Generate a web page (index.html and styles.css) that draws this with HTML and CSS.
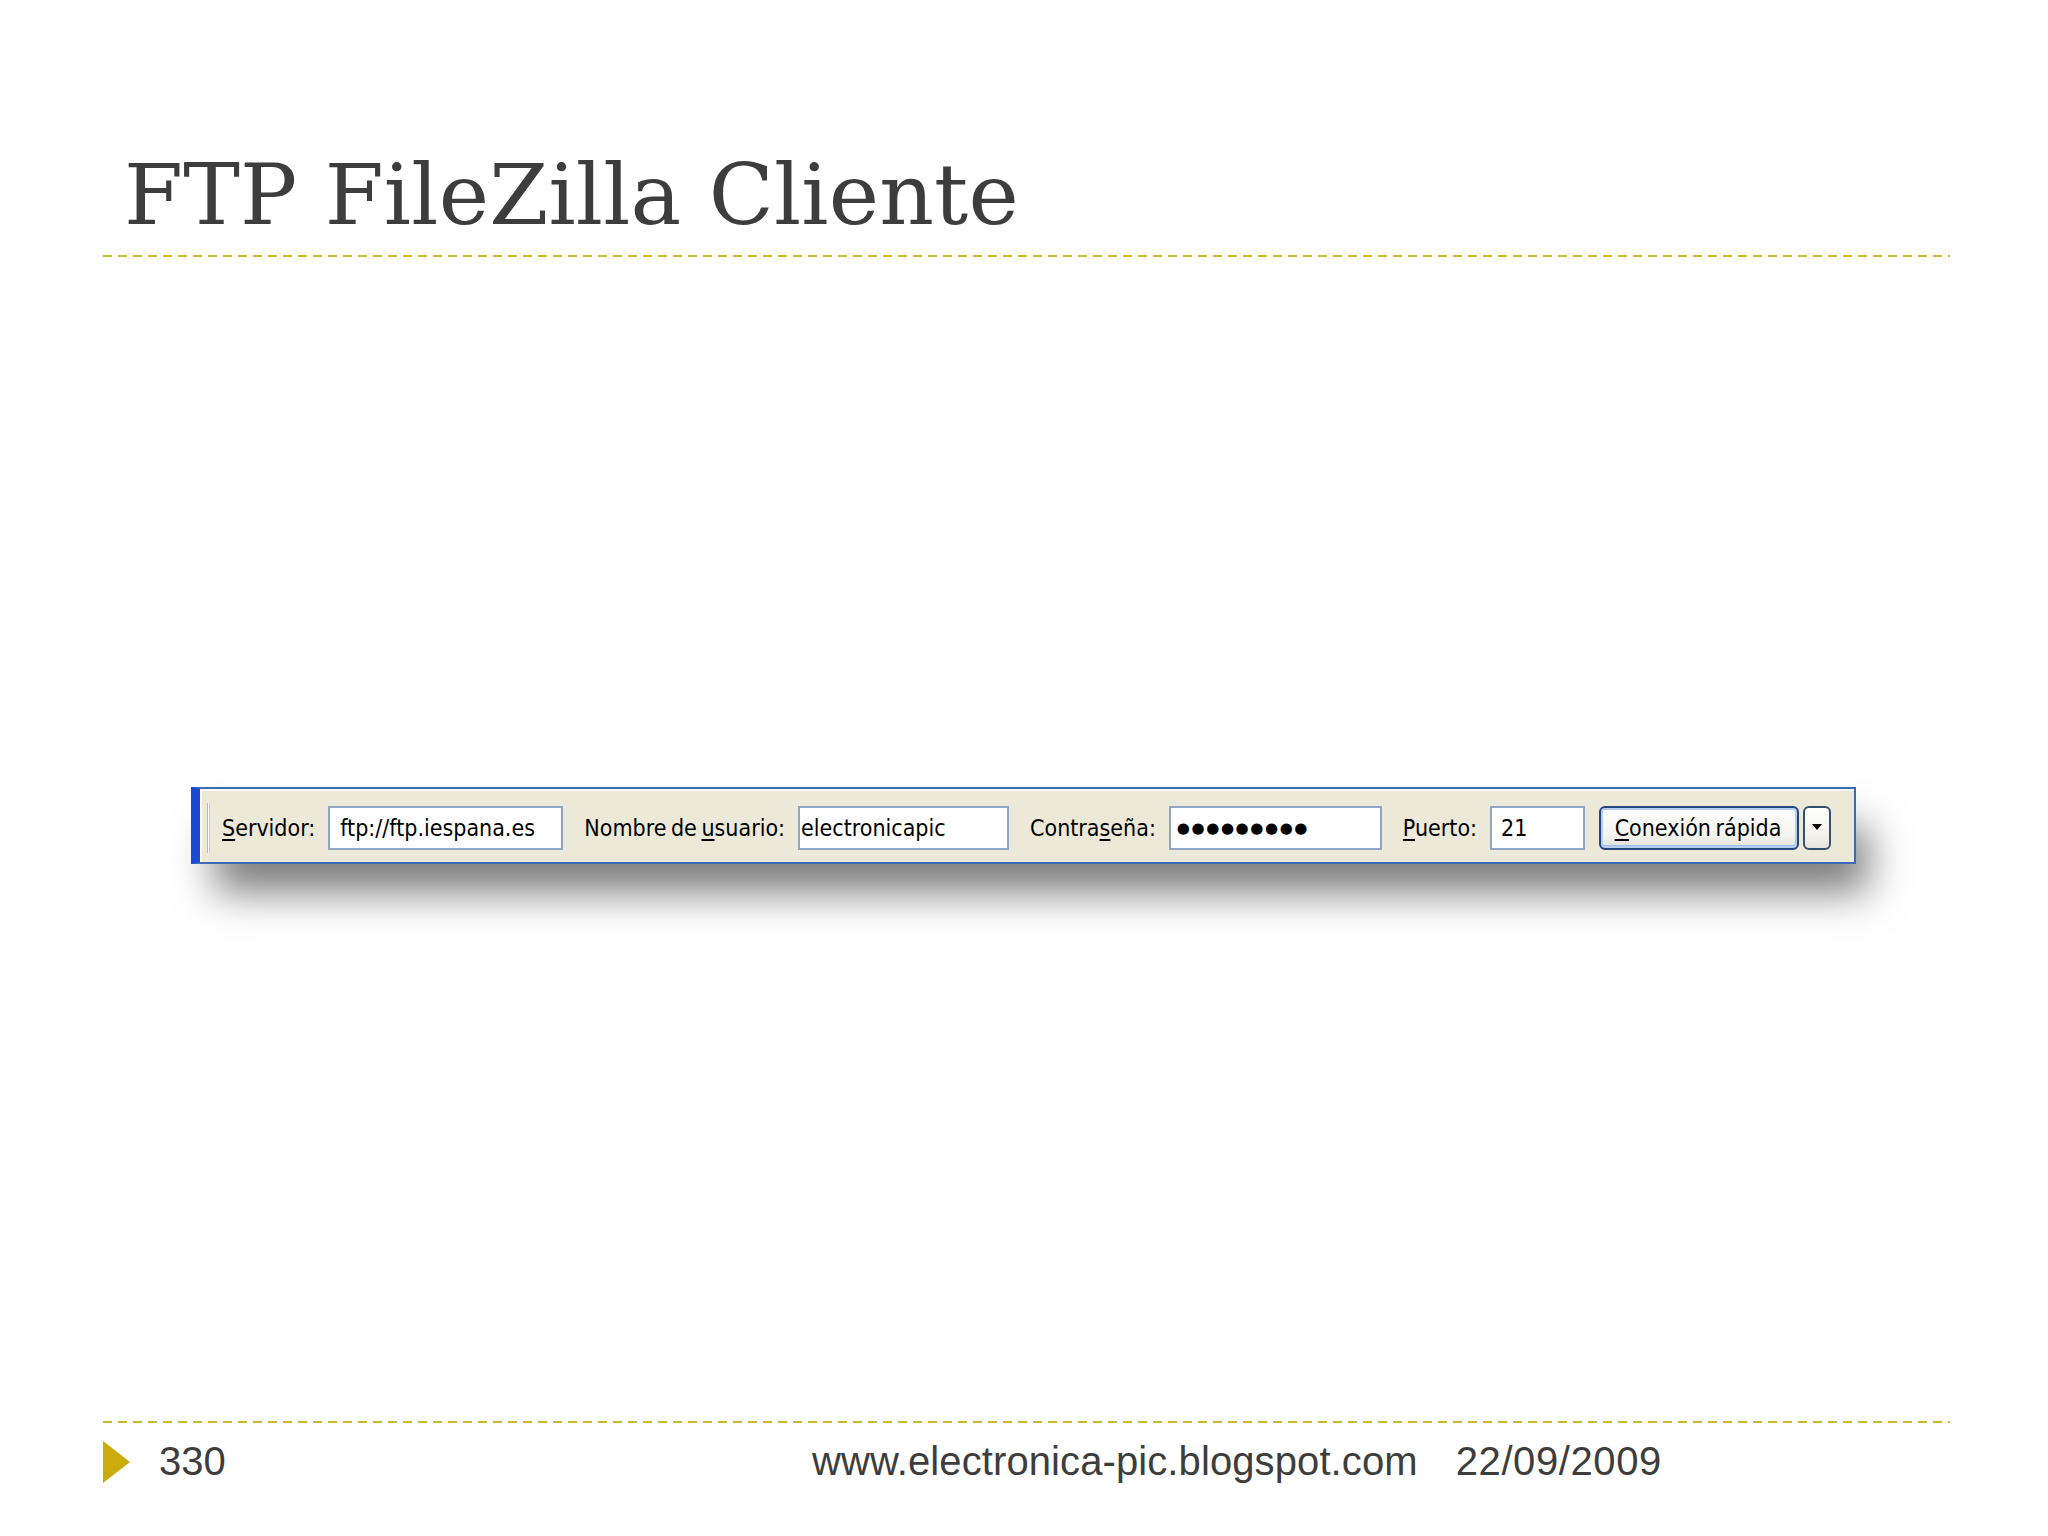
FILE: index.html
```html
<!DOCTYPE html>
<html lang="es">
<head>
<meta charset="utf-8">
<title>FTP FileZilla Cliente</title>
<link rel="stylesheet" href="styles.css">
</head>
<body>
<div class="slide">
  <header class="slide-head">
    <h1 class="slide-title">FTP FileZilla Cliente</h1>
    <div class="dash-rule"></div>
  </header>

  <main class="slide-body">
    <div class="qc-bar">
      <div class="grip"></div>
      <div class="qc-fields">
        <div class="qc-field">
          <span class="qc-label"><u>S</u>ervidor:</span>
          <div class="qc-input w-host pad-host">ftp://ftp.iespana.es</div>
        </div>
        <div class="qc-field">
          <span class="qc-label">Nombre de <u>u</u>suario:</span>
          <div class="qc-input w-user pad-user">electronicapic</div>
        </div>
        <div class="qc-field">
          <span class="qc-label">Contra<u>s</u>eña:</span>
          <div class="qc-input w-pass pad-pass"><span class="pw-dots">●●●●●●●●●</span></div>
        </div>
        <div class="qc-field">
          <span class="qc-label"><u>P</u>uerto:</span>
          <div class="qc-input w-port pad-port">21</div>
        </div>
        <div class="qc-connect">
          <div class="qc-button"><u>C</u>onexión rápida</div>
          <div class="qc-drop"><span class="drop-arrow"></span></div>
        </div>
      </div>
    </div>
  </main>

  <footer class="slide-foot">
    <div class="dash-rule"></div>
    <div class="foot-row">
      <div class="foot-num"><span class="bullet-tri"></span><span class="num">330</span></div>
      <div class="foot-url">www.electronica-pic.blogspot.com</div>
      <div class="foot-date">22/09/2009</div>
    </div>
  </footer>
</div>
</body>
</html>
```

FILE: styles.css
```css
html, body {
  margin: 0;
  padding: 0;
  background: #ffffff;
}

.slide {
  width: 2048px;
  height: 1536px;
  box-sizing: border-box;
  padding: 0 98px 0 103px;
  display: flex;
  flex-direction: column;
  background: #ffffff;
}

/* ---------- header ---------- */
.slide-head {
  padding-top: 152px;
}

.slide-title {
  margin: 0 0 0 21px;
  font-family: "DejaVu Serif", "Liberation Serif", serif;
  font-weight: normal;
  font-size: 85px;
  letter-spacing: 0.2px;
  line-height: 1;
  color: #3d3d3d;
  white-space: nowrap;
}

.dash-rule {
  height: 2px;
  background: repeating-linear-gradient(to right, #cbb928 0 9px, transparent 9px 15px);
}

.slide-head .dash-rule {
  margin-top: 18px;
}

/* ---------- body / quick connect bar ---------- */
.slide-body {
  flex: 1;
  padding: 530px 0 0 88px;
}

.qc-bar {
  width: 1665px;
  height: 77px;
  box-sizing: border-box;
  display: flex;
  align-items: center;
  padding-top: 5px;
  background: #ece9d8;
  border: 2px solid #3b6bb8;
  border-left: 9px solid #1848d4;
  box-shadow:
    inset 0 2px 0 #fbfaf4,
    inset 2px 0 0 #fbfaf4,
    18px 34px 42px -6px rgba(0, 0, 0, 0.52);
  font-family: "DejaVu Sans Condensed", "DejaVu Sans", sans-serif;
  font-stretch: condensed;
  font-size: 23px;
  word-spacing: -2px;
  color: #000;
}

.grip {
  width: 3px;
  height: 50px;
  margin: 0 12px 0 7px;
  background: linear-gradient(to right, #bdbaa9 0 1px, #ffffff 1px 2px, #cfccbc 2px 3px);
  flex: none;
}

.qc-fields {
  display: flex;
  align-items: center;
  gap: 21px;
}

.qc-field {
  display: flex;
  align-items: center;
  gap: 13px;
}

.qc-label {
  white-space: nowrap;
}

u {
  text-decoration-thickness: 2px;
  text-underline-offset: 3px;
}

.qc-input {
  height: 44px;
  box-sizing: border-box;
  border: 2px solid #8ea6c2;
  background: #ffffff;
  display: flex;
  align-items: center;
  white-space: nowrap;
  overflow: hidden;
}

.w-host { width: 235px; }
.w-user { width: 211px; }
.w-pass { width: 213px; }
.w-port { width: 95px; }

.pad-host { padding-left: 10px; }
.pad-user { padding-left: 1px; }
.pad-pass { padding-left: 6px; }
.pad-port { padding-left: 9px; }

.pw-dots {
  font-family: "DejaVu Sans", sans-serif;
  font-stretch: normal;
  font-size: 15px;
  letter-spacing: 1.6px;
  line-height: 1;
}

.qc-connect {
  display: flex;
  align-items: center;
  gap: 4px;
  margin-left: -7px;
}

.qc-button {
  width: 200px;
  height: 44px;
  box-sizing: border-box;
  border: 2px solid #24467c;
  border-radius: 6px;
  background: linear-gradient(#fdfdfc, #f3f3ef 70%, #e2e0d6);
  box-shadow: inset 0 0 0 2px #b7cdf0, inset 0 -3px 0 #9fbbe8;
  display: flex;
  align-items: center;
  justify-content: center;
  padding-right: 2px;
  white-space: nowrap;
}

.qc-drop {
  width: 28px;
  height: 44px;
  box-sizing: border-box;
  border: 2px solid #34506f;
  border-radius: 6px;
  background: linear-gradient(#fefefe, #f2f1ec 70%, #e4e2d9);
  display: flex;
  justify-content: center;
  padding-top: 16px;
}

.drop-arrow {
  width: 0;
  height: 0;
  border-left: 5px solid transparent;
  border-right: 5px solid transparent;
  border-top: 6px solid #000;
}

/* ---------- footer ---------- */
.slide-foot {
  padding-bottom: 53px;
}

.foot-row {
  margin-top: 18px;
  display: flex;
  align-items: flex-start;
  font-family: "Liberation Sans", Arial, sans-serif;
  font-size: 40px;
  line-height: 1;
  color: #3d3d3d;
}

.foot-num {
  flex: 0 0 709px;
  display: flex;
  align-items: flex-start;
  gap: 29px;
}

.bullet-tri {
  width: 0;
  height: 0;
  border-left: 27px solid #c9ab0c;
  border-top: 21px solid transparent;
  border-bottom: 21px solid transparent;
}

.foot-url {
  letter-spacing: 0.1px;
}

.foot-date {
  margin-left: 38px;
  letter-spacing: 0.6px;
}
```
